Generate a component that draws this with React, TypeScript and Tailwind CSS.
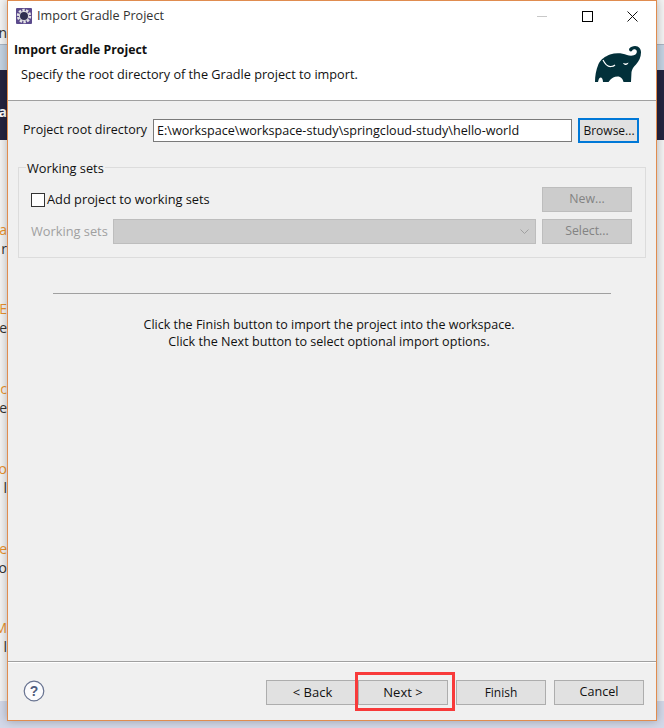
const Btn = ({ label, cls = "" }: { label: string; cls?: string }) => (
  <div className={`flex h-[25px] items-center justify-center border border-[#adadad] bg-[#e1e1e1] text-[#111] ${cls}`}>{label}</div>
);

const Elephant = () => (
  <svg viewBox="0 0 46 36" className="h-[36px] w-[46px]">
    <path
      fill="#02303a"
      d="M34 3C35.500 .8 38 0 40 0C44 0 46 3 46 6.500C46 11 44 15 41 18.500C38.500 21 37 23 36.500 26L36 36H28.500C28 33 26 30.500 22.500 30.500C19 30.500 17 32 15.500 33.500L13.500 36H8C8 33.500 7 31.500 5.500 31.500C4 31.500 3.500 34 3 36H0C0 30 1 24 3.500 18C6 13 10 10.500 15 8.500C21 6.500 27 7 32 9C35 10 39 10 41 8C42.500 6 42 4 40 3.300C38.500 2.800 37.500 3.500 37 5C36 6 34 5.500 34 3Z"
    />
    <path d="M8 14C10 18 13 21 16 20.500C18 20.500 19.500 19.500 20 19" stroke="#fff" strokeWidth="1.200" fill="none" />
    <path d="M28 17C30 17.800 32 17.500 33.500 16.500C33 19.500 29.500 20 28 17Z" fill="#fff" />
  </svg>
);

const SideRow = ({ a, b }: { a: string; b: string }) => (
  <>
    <div className="flex h-[19px] justify-end leading-[19px] text-[#e8912d]">{a}</div>
    <div className="flex h-[19px] justify-end leading-[19px] text-[#333]">{b}</div>
  </>
);

const LeftStrip = () => (
  <div className="flex h-[728px] w-[7px] shrink-0 flex-col overflow-hidden bg-[#f3f3f3] text-[14px] whitespace-nowrap">
    <div className="flex h-[44px] justify-end pt-[25px] leading-[16px] text-[#333]">n</div>
    <div className="h-[26px] border-t border-[#a9b4c2] bg-[#c3d2e2]" />
    <div className="flex h-[70px] justify-end bg-[#25233f] pt-[34px] font-bold leading-[16px] text-white">a</div>
    <div className="h-[80px] shrink-0" />
    <SideRow a="a" b="r" />
    <div className="h-[41px] shrink-0" />
    <SideRow a="E" b="e" />
    <div className="h-[42px] shrink-0" />
    <SideRow a="c" b="e" />
    <div className="h-[42px] shrink-0" />
    <SideRow a="o" b="l" />
    <div className="h-[42px] shrink-0" />
    <SideRow a="e" b="o" />
    <div className="h-[41px] shrink-0" />
    <SideRow a="M" b="l" />
    <div className="flex-1" />
    <div className="h-[27px] bg-[#d3d8e8]" />
  </div>
);

export default function App() {
  return (
    <div className="flex h-[728px] w-[664px] items-start overflow-hidden bg-[#d3d8e8] font-['Open_Sans','Noto_Sans',sans-serif] text-[12.5px] text-[#111]">
      <LeftStrip />
      <div className="relative z-10 flex h-[721px] w-[650px] shrink-0 flex-col border border-[#e08c4f] bg-[#f0f0f0] shadow-[0_0_9px_rgba(0,0,0,0.28)]">
        <div className="flex h-[30px] shrink-0 items-center bg-white pl-[8px]">
          <svg viewBox="0 0 16 16" className="h-[16px] w-[16px]">
            <rect width="16" height="16" rx="1" fill="#5b4a8c" />
            <circle cx="8" cy="8" r="6" fill="none" stroke="#e4e4e4" strokeWidth="2.400" strokeDasharray="2.400 1.300" />
            <circle cx="8" cy="8" r="5" fill="#e4e4e4" />
            <circle cx="8" cy="8" r="4" fill="#2f3050" />
          </svg>
          <span className="ml-[5px] text-[12.6px] text-[#333]">Import Gradle Project</span>
          <div className="ml-auto flex h-full items-center">
            <div className="flex w-[46px] justify-center"><div className="h-px w-[10px] bg-[#c8c8c8]" /></div>
            <div className="flex w-[45px] justify-center"><div className="h-[11px] w-[11px] border border-black" /></div>
            <div className="flex w-[46px] justify-center pr-[2px]">
              <svg viewBox="0 0 11 11" className="h-[11px] w-[11px]" stroke="#111" strokeWidth="1"><path d="M.5.5l10 10M10.500.5l-10 10" /></svg>
            </div>
          </div>
        </div>
        <div className="flex h-[70px] shrink-0 items-start justify-between border-b border-[#a0a0a0] bg-white pl-[6px] pr-[15px]">
          <div>
            <div className="mt-[10px] text-[12.300px] font-bold leading-[18px]">Import Gradle Project</div>
            <div className="ml-[7px] mt-[6px] text-[12.700px] leading-[18px]">Specify the root directory of the Gradle project to import.</div>
          </div>
          <div className="mt-[15px]"><Elephant /></div>
        </div>
        <div className="flex flex-1 flex-col border-b border-[#a0a0a0] pl-[10px] pr-[17px] shadow-[0_1px_0_#fff]">
          <div className="mt-[17px] flex h-[25px] items-center">
            <span className="ml-[5px] w-[130px]">Project root directory</span>
            <div className="flex h-[23px] w-[419px] items-center border border-[#7a7a7a] bg-white pl-[3px] pt-px text-[12.600px]">E:\workspace\workspace-study\springcloud-study\hello-world</div>
            <div className="ml-[6px] flex h-[25px] flex-1 items-center justify-center border-2 border-[#0078d7] bg-[#e1e1e1] pl-px text-[12px]">Browse...</div>
          </div>
          <div className="relative mt-[24px] -mr-[7px] h-[91px] border border-[#dcdcdc] pl-[12px] pr-[13px]">
            <span className="absolute left-[7px] top-[-8px] bg-[#f0f0f0] px-[1px] text-[12.800px] leading-[16px]">Working sets</span>
            <div className="mt-[19px] flex h-[25px] items-center justify-between">
              <div className="flex items-center">
                <div className="h-[14px] w-[14px] border border-[#333] bg-white" />
                <span className="ml-[2px] text-[12.800px]">Add project to working sets</span>
              </div>
              <Btn label="New..." cls="w-[90px] !border-[#bdbdbd] !bg-[#cccccc] text-[12.300px] !text-[#838383]" />
            </div>
            <div className="mt-[7px] flex h-[25px] items-center">
              <span className="w-[82px] text-[12.800px] text-[#a0a0a0]">Working sets</span>
              <div className="flex h-[25px] w-[423px] items-center justify-end border border-[#bdbdbd] bg-[#cccccc] pr-[6px]">
                <svg viewBox="0 0 9 5" className="h-[5px] w-[9px]" fill="none" stroke="#a0a0a0"><path d="M.5.5l4 4 4-4" /></svg>
              </div>
              <Btn label="Select..." cls="ml-[6px] w-[90px] !border-[#bdbdbd] !bg-[#cccccc] text-[12.300px] !text-[#838383]" />
            </div>
          </div>
          <div className="ml-[35px] mt-[35px] h-px w-[558px] bg-[#a0a0a0]" />
          <div className="ml-[1px] mt-[22px] text-center leading-[17px]">
            <div>Click the Finish button to import the project into the workspace.</div>
            <div className="text-[12.600px]">Click the Next button to select optional import options.</div>
          </div>
        </div>
        <div className="flex h-[58px] shrink-0 items-start pl-[15px] pr-[12px] pt-[18px]">
          <svg viewBox="0 0 22 22" className="h-[22px] w-[22px]">
            <circle cx="11" cy="11" r="9.800" fill="#fbfbfd" stroke="#66718f" strokeWidth="1.200" />
            <text x="11" y="16" textAnchor="middle" fontSize="14" fontWeight="700" fill="#4f5b7d" fontFamily="Liberation Sans">?</text>
          </svg>
          <div className="ml-auto flex gap-[8px]">
            <div className="flex">
              <Btn label="< Back" cls="w-[92px] border-r-0 text-[13px]" />
              <div className="relative">
                <Btn label="Next >" cls="w-[90px] text-[13px]" />
                <div className="absolute -bottom-[6px] -left-[3px] -right-[7px] -top-[8px] border-[3px] border-[#f83a3a]" />
              </div>
            </div>
            <Btn label="Finish" cls="w-[90px] text-[12px]" />
            <Btn label="Cancel" cls="w-[90px] text-[12.600px]" />
          </div>
        </div>
      </div>
      <div className="flex h-[728px] w-[7px] shrink-0 flex-col">
        <div className="h-[44px] bg-[#f3f3f3]" />
        <div className="h-[26px] border-t border-[#a9b4c2] bg-[#c3d2e2]" />
        <div className="h-[70px] bg-[#25233f]" />
        <div className="h-[561px] bg-[#f3f3f3]" />
        <div className="flex-1 bg-[#d3d8e8]" />
      </div>
    </div>
  );
}
